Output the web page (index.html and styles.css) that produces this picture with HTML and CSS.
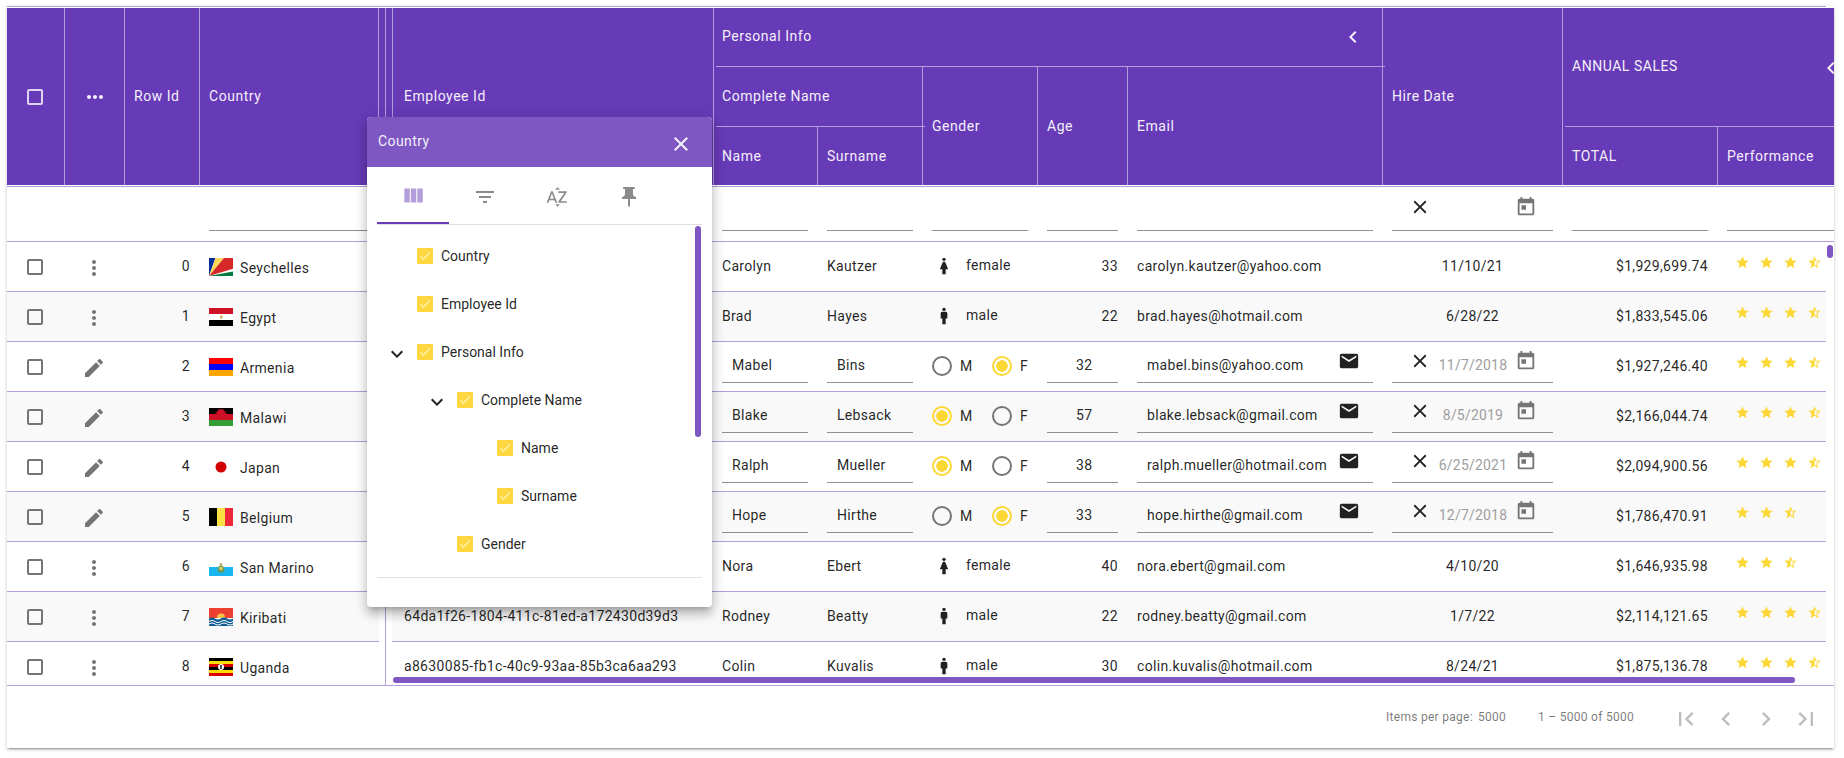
FILE: index.html
```html
<!DOCTYPE html>
<html lang="en">
<head>
<meta charset="utf-8">
<title>Grid</title>
<link rel="stylesheet" href="styles.css">
</head>
<body>
<svg class="sprite" aria-hidden="true">
  <defs>
    <symbol id="i-dots-h" viewBox="0 0 24 24"><path d="M6 10c-1.1 0-2 .9-2 2s.9 2 2 2 2-.9 2-2-.9-2-2-2zm12 0c-1.1 0-2 .9-2 2s.9 2 2 2 2-.9 2-2-.9-2-2-2zm-6 0c-1.1 0-2 .9-2 2s.9 2 2 2 2-.9 2-2-.9-2-2-2z"/></symbol>
    <symbol id="i-dots-v" viewBox="0 0 24 24"><path d="M12 8c1.1 0 2-.9 2-2s-.9-2-2-2-2 .9-2 2 .9 2 2 2zm0 2c-1.1 0-2 .9-2 2s.9 2 2 2 2-.9 2-2-.9-2-2-2zm0 6c-1.1 0-2 .9-2 2s.9 2 2 2 2-.9 2-2-.9-2-2-2z"/></symbol>
    <symbol id="i-edit" viewBox="0 0 24 24"><path d="M3 17.25V21h3.75L17.81 9.94l-3.75-3.75L3 17.25zM20.71 7.04c.39-.39.39-1.02 0-1.41l-2.34-2.34c-.39-.39-1.02-.39-1.41 0l-1.83 1.83 3.75 3.75 1.83-1.83z"/></symbol>
    <symbol id="i-left" viewBox="0 0 24 24"><path d="M15.41 7.41L14 6l-6 6 6 6 1.41-1.41L10.83 12z"/></symbol>
    <symbol id="i-right" viewBox="0 0 24 24"><path d="M10 6L8.59 7.41 13.17 12l-4.58 4.59L10 18l6-6z"/></symbol>
    <symbol id="i-first" viewBox="0 0 24 24"><path d="M18.41 16.59L13.82 12l4.59-4.59L17 6l-6 6 6 6zM6 6h2v12H6z"/></symbol>
    <symbol id="i-last" viewBox="0 0 24 24"><path d="M5.59 7.41L10.18 12l-4.59 4.59L7 18l6-6-6-6zM16 6h2v12h-2z"/></symbol>
    <symbol id="i-down" viewBox="0 0 24 24"><path d="M16.59 8.59L12 13.17 7.41 8.59 6 10l6 6 6-6z"/></symbol>
    <symbol id="i-close" viewBox="0 0 24 24"><path d="M19 6.41L17.59 5 12 10.59 6.41 5 5 6.41 10.59 12 5 17.59 6.41 19 12 13.41 17.59 19 19 17.59 13.41 12z"/></symbol>
    <symbol id="i-today" viewBox="0 0 24 24"><path d="M19 3h-1V1h-2v2H8V1H6v2H5c-1.11 0-1.99.9-1.99 2L3 19c0 1.1.89 2 2 2h14c1.1 0 2-.9 2-2V5c0-1.1-.9-2-2-2zm0 16H5V8h14v11zM7 10h5v5H7z"/></symbol>
    <symbol id="i-mail" viewBox="0 0 24 24"><path d="M20 4H4c-1.1 0-1.99.9-1.99 2L2 18c0 1.1.9 2 2 2h16c1.1 0 2-.9 2-2V6c0-1.1-.9-2-2-2zm0 4l-8 5-8-5V6l8 5 8-5v2z"/></symbol>
    <symbol id="i-star" viewBox="0 0 24 24"><path d="M12 17.27L18.18 21l-1.64-7.03L22 9.24l-7.19-.61L12 2 9.19 8.63 2 9.24l5.46 4.73L5.82 21z"/></symbol>
    <symbol id="i-half" viewBox="0 0 24 24"><path d="M22 9.24l-7.19-.62L12 2 9.19 8.63 2 9.24l5.46 4.73L5.82 21 12 17.27 18.18 21l-1.63-7.03L22 9.24zM12 15.4V6.1l1.71 4.04 4.38.38-3.32 2.88 1 4.28L12 15.4z"/></symbol>
    <symbol id="i-woman" viewBox="0 0 24 24"><circle cx="12" cy="4" r="2"/><path d="M13.94 8.31C13.62 7.52 12.85 7 12 7s-1.62.52-1.94 1.31L7 16h3v6h4v-6h3l-3.06-7.69z"/></symbol>
    <symbol id="i-man" viewBox="0 0 24 24"><circle cx="12" cy="4" r="2"/><path d="M14 7h-4c-1.1 0-2 .9-2 2v6h2v7h4v-7h2V9c0-1.1-.9-2-2-2z"/></symbol>
    <symbol id="i-columns" viewBox="0 0 24 24"><path d="M10 18h5V5h-5v13zm-6 0h5V5H4v13zM16 5v13h5V5h-5z"/></symbol>
    <symbol id="i-filter" viewBox="0 0 24 24"><path d="M10 18h4v-2h-4v2zM3 6v2h18V6H3zm3 7h12v-2H6v2z"/></symbol>
    <symbol id="i-sort" viewBox="0 0 24 24"><path d="M14.94 4.66h-4.72l2.36-2.36zm-4.69 14.71h4.66l-2.33 2.33zM6.1 6.27L1.6 17.73h1.84l.92-2.45h5.11l.92 2.45h1.84L7.74 6.27H6.1zm-1.13 7.37l1.94-5.18 1.94 5.18H4.97zm10.76 2.5h6.12v1.59h-8.53v-1.29l5.92-8.56h-5.88v-1.6h8.3v1.26l-5.93 8.6z"/></symbol>
    <symbol id="i-pin" viewBox="0 0 24 24"><path d="M16 9V4h1c.55 0 1-.45 1-1s-.45-1-1-1H7c-.55 0-1 .45-1 1s.45 1 1 1h1v5c0 1.66-1.34 3-3 3v2h5.97v7l1 1 1-1v-7H19v-2c-1.66 0-3-1.34-3-3z"/></symbol>
    <symbol id="i-check" viewBox="0 0 16 16"><path d="M3.5 8.2l3 3.2 6-7" fill="none" stroke="#fff" stroke-width="1"/></symbol>

    <symbol id="f-sc" viewBox="0 0 24 18"><rect width="24" height="18" fill="#fff"/><path d="M0 18V0h6.500z" fill="#002f9e"/><path d="M0 18L6.500 0h8.500z" fill="#fcd856"/><path d="M0 18L15 0h9v10.800z" fill="#d62828"/><path d="M0 18l24-4.500V18z" fill="#007a3d"/></symbol>
    <symbol id="f-eg" viewBox="0 0 24 18"><rect width="24" height="6" fill="#ce1126"/><rect y="6" width="24" height="6" fill="#fff"/><rect y="12" width="24" height="6" fill="#000"/><rect x="11" y="7.500" width="2.500" height="3" fill="#d8b35a"/></symbol>
    <symbol id="f-am" viewBox="0 0 24 18"><rect width="24" height="6" fill="#f00"/><rect y="6" width="24" height="6" fill="#00f"/><rect y="12" width="24" height="6" fill="#ffa500"/></symbol>
    <symbol id="f-mw" viewBox="0 0 24 18"><rect width="24" height="6" fill="#000"/><rect y="6" width="24" height="6" fill="#ce1126"/><rect y="12" width="24" height="6" fill="#339e35"/><path d="M7.500 6a4.500 4.500 0 0 1 9 0zM5.500 5.500h1M17.500 5.500h1M6.500 3l1 .7M17.500 3l-1 .7M9.500 1.200l.4 1M14.500 1.200l-.4 1" fill="#ce1126" stroke="#ce1126" stroke-width=".6"/></symbol>
    <symbol id="f-jp" viewBox="0 0 24 18"><circle cx="12" cy="9" r="5.500" fill="#d30000"/></symbol>
    <symbol id="f-be" viewBox="0 0 24 18"><rect width="8" height="18" fill="#000"/><rect x="8" width="8" height="18" fill="#fae042"/><rect x="16" width="8" height="18" fill="#ed2939"/></symbol>
    <symbol id="f-sm" viewBox="0 0 24 18"><rect y="9" width="24" height="9" fill="#19b6f0"/><path d="M8.500 13c0-4 1.500-5.500 3.500-5.500s3.500 1.500 3.500 5.500c-1 2-6 2-7 0z" fill="#5c9a55"/><circle cx="12" cy="10.500" r="2" fill="#d9c46a"/><path d="M10.500 5.500h3l-.5 2h-2z" fill="#b5a04a"/></symbol>
    <symbol id="f-ki" viewBox="0 0 24 18"><rect width="24" height="18" fill="#eb4030"/><circle cx="12" cy="9.500" r="4" fill="#f7c24a"/><rect y="10" width="24" height="8" fill="#fff"/><path d="M0 10.500q3-2 6 0t6 0 6 0 6 0V13q-3 2-6 0t-6 0-6 0-6 0zM0 14q3-2 6 0t6 0 6 0 6 0V18H0z" fill="#0f5c92"/><path d="M0 15.500q3-2 6 0t6 0 6 0 6 0v1q-3 2-6 0t-6 0-6 0-6 0z" fill="#fff"/></symbol>
    <symbol id="f-ug" viewBox="0 0 24 18"><rect width="24" height="3" fill="#000"/><rect y="3" width="24" height="3" fill="#fcdc04"/><rect y="6" width="24" height="3" fill="#d90000"/><rect y="9" width="24" height="3" fill="#000"/><rect y="12" width="24" height="3" fill="#fcdc04"/><rect y="15" width="24" height="3" fill="#d90000"/><circle cx="12" cy="9" r="3" fill="#fff"/><path d="M11 7h2v4h-2z" fill="#555"/></symbol>
  </defs>
</svg>

<main class="card">
  <div class="topline"></div>

  <div class="head cols">
    <div class="hc h-a center"><span class="box box-light"></span></div>
    <div class="hc h-b center"><svg class="ic"><use href="#i-dots-h"/></svg></div>
    <div class="hc h-c">Row Id</div>
    <div class="hc h-d end-line">Country</div>
    <div class="h-gap gap"></div>
    <div class="hc h-e pad-emp">Employee Id</div>
    <div class="hc h-personal rule"><span class="grow">Personal Info</span><svg class="ic ic-personal"><use href="#i-left"/></svg></div>
    <div class="hc h-complete rule">Complete Name</div>
    <div class="hc h-name">Name</div>
    <div class="hc h-surname">Surname</div>
    <div class="hc h-gender">Gender</div>
    <div class="hc h-age">Age</div>
    <div class="hc h-email">Email</div>
    <div class="hc h-hire">Hire Date</div>
    <div class="hc h-annual rule"><span class="grow">ANNUAL SALES</span><svg class="ic ic-annual"><use href="#i-left"/></svg></div>
    <div class="hc h-total">TOTAL</div>
    <div class="hc h-perf">Performance</div>
  </div>

  <div class="filter cols">
    <div></div><div></div><div></div>
    <div class="fc"><div class="field"></div></div>
    <div></div>
    <div class="fc"><div class="field"></div></div>
    <div class="fc fc-name"><div class="field"></div></div>
    <div class="fc"><div class="field"></div></div>
    <div class="fc"><div class="field"></div></div>
    <div class="fc"><div class="field"></div></div>
    <div class="fc"><div class="field"></div></div>
    <div class="fc"><div class="field field-date"><svg class="ic ic22 dark"><use href="#i-close"/></svg><span class="date"></span><svg class="ic ic22 grey"><use href="#i-today"/></svg></div></div>
    <div class="fc"><div class="field"></div></div>
    <div class="fc"><div class="field"></div></div>
  </div>

  <div class="body">
    <div class="rows">

      <div class="row cols">
        <div class="cell center first"><span class="box"></span></div>
        <div class="cell center"><svg class="ic grey"><use href="#i-dots-v"/></svg></div>
        <div class="cell num id">0</div>
        <div class="cell flagcell"><svg class="flag"><use href="#f-sc"/></svg><span>Seychelles</span></div>
        <div class="gap"></div>
        <div class="cell emp"></div>
        <div class="cell name">Carolyn</div>
        <div class="cell">Kautzer</div>
        <div class="cell gender"><svg class="ic-g"><use href="#i-woman"/></svg><span class="gtext">female</span></div>
        <div class="cell num">33</div>
        <div class="cell">carolyn.kautzer@yahoo.com</div>
        <div class="cell mid">11/10/21</div>
        <div class="cell num">$1,929,699.74</div>
        <div class="cell stars"><svg class="st"><use href="#i-star"/></svg><svg class="st"><use href="#i-star"/></svg><svg class="st"><use href="#i-star"/></svg><svg class="st"><use href="#i-half"/></svg></div>
      </div>

      <div class="row cols alt">
        <div class="cell center first"><span class="box"></span></div>
        <div class="cell center"><svg class="ic grey"><use href="#i-dots-v"/></svg></div>
        <div class="cell num id">1</div>
        <div class="cell flagcell"><svg class="flag"><use href="#f-eg"/></svg><span>Egypt</span></div>
        <div class="gap"></div>
        <div class="cell emp"></div>
        <div class="cell name">Brad</div>
        <div class="cell">Hayes</div>
        <div class="cell gender"><svg class="ic-g"><use href="#i-man"/></svg><span class="gtext">male</span></div>
        <div class="cell num">22</div>
        <div class="cell">brad.hayes@hotmail.com</div>
        <div class="cell mid">6/28/22</div>
        <div class="cell num">$1,833,545.06</div>
        <div class="cell stars"><svg class="st"><use href="#i-star"/></svg><svg class="st"><use href="#i-star"/></svg><svg class="st"><use href="#i-star"/></svg><svg class="st"><use href="#i-half"/></svg></div>
      </div>

      <div class="row cols">
        <div class="cell center first"><span class="box"></span></div>
        <div class="cell center"><svg class="ic grey"><use href="#i-edit"/></svg></div>
        <div class="cell num id">2</div>
        <div class="cell flagcell"><svg class="flag"><use href="#f-am"/></svg><span>Armenia</span></div>
        <div class="gap"></div>
        <div class="cell emp"></div>
        <div class="cell name edit"><div class="field"><span class="val">Mabel</span></div></div>
        <div class="cell edit"><div class="field"><span class="val">Bins</span></div></div>
        <div class="cell radios"><span class="radio"></span><span class="rl">M</span><span class="radio on"></span><span class="rl">F</span></div>
        <div class="cell edit"><div class="field"><span class="val val-age">32</span></div></div>
        <div class="cell edit"><div class="field field-mail"><span class="val grow">mabel.bins@yahoo.com</span><svg class="ic ic22 dark"><use href="#i-mail"/></svg></div></div>
        <div class="cell edit"><div class="field field-date"><svg class="ic ic22 dark"><use href="#i-close"/></svg><span class="date">11/7/2018</span><svg class="ic ic22 grey"><use href="#i-today"/></svg></div></div>
        <div class="cell num">$1,927,246.40</div>
        <div class="cell stars"><svg class="st"><use href="#i-star"/></svg><svg class="st"><use href="#i-star"/></svg><svg class="st"><use href="#i-star"/></svg><svg class="st"><use href="#i-half"/></svg></div>
      </div>

      <div class="row cols alt">
        <div class="cell center first"><span class="box"></span></div>
        <div class="cell center"><svg class="ic grey"><use href="#i-edit"/></svg></div>
        <div class="cell num id">3</div>
        <div class="cell flagcell"><svg class="flag"><use href="#f-mw"/></svg><span>Malawi</span></div>
        <div class="gap"></div>
        <div class="cell emp"></div>
        <div class="cell name edit"><div class="field"><span class="val">Blake</span></div></div>
        <div class="cell edit"><div class="field"><span class="val">Lebsack</span></div></div>
        <div class="cell radios"><span class="radio on"></span><span class="rl">M</span><span class="radio"></span><span class="rl">F</span></div>
        <div class="cell edit"><div class="field"><span class="val val-age">57</span></div></div>
        <div class="cell edit"><div class="field field-mail"><span class="val grow">blake.lebsack@gmail.com</span><svg class="ic ic22 dark"><use href="#i-mail"/></svg></div></div>
        <div class="cell edit"><div class="field field-date"><svg class="ic ic22 dark"><use href="#i-close"/></svg><span class="date">8/5/2019</span><svg class="ic ic22 grey"><use href="#i-today"/></svg></div></div>
        <div class="cell num">$2,166,044.74</div>
        <div class="cell stars"><svg class="st"><use href="#i-star"/></svg><svg class="st"><use href="#i-star"/></svg><svg class="st"><use href="#i-star"/></svg><svg class="st"><use href="#i-half"/></svg></div>
      </div>

      <div class="row cols">
        <div class="cell center first"><span class="box"></span></div>
        <div class="cell center"><svg class="ic grey"><use href="#i-edit"/></svg></div>
        <div class="cell num id">4</div>
        <div class="cell flagcell"><svg class="flag"><use href="#f-jp"/></svg><span>Japan</span></div>
        <div class="gap"></div>
        <div class="cell emp"></div>
        <div class="cell name edit"><div class="field"><span class="val">Ralph</span></div></div>
        <div class="cell edit"><div class="field"><span class="val">Mueller</span></div></div>
        <div class="cell radios"><span class="radio on"></span><span class="rl">M</span><span class="radio"></span><span class="rl">F</span></div>
        <div class="cell edit"><div class="field"><span class="val val-age">38</span></div></div>
        <div class="cell edit"><div class="field field-mail"><span class="val grow">ralph.mueller@hotmail.com</span><svg class="ic ic22 dark"><use href="#i-mail"/></svg></div></div>
        <div class="cell edit"><div class="field field-date"><svg class="ic ic22 dark"><use href="#i-close"/></svg><span class="date">6/25/2021</span><svg class="ic ic22 grey"><use href="#i-today"/></svg></div></div>
        <div class="cell num">$2,094,900.56</div>
        <div class="cell stars"><svg class="st"><use href="#i-star"/></svg><svg class="st"><use href="#i-star"/></svg><svg class="st"><use href="#i-star"/></svg><svg class="st"><use href="#i-half"/></svg></div>
      </div>

      <div class="row cols alt">
        <div class="cell center first"><span class="box"></span></div>
        <div class="cell center"><svg class="ic grey"><use href="#i-edit"/></svg></div>
        <div class="cell num id">5</div>
        <div class="cell flagcell"><svg class="flag"><use href="#f-be"/></svg><span>Belgium</span></div>
        <div class="gap"></div>
        <div class="cell emp"></div>
        <div class="cell name edit"><div class="field"><span class="val">Hope</span></div></div>
        <div class="cell edit"><div class="field"><span class="val">Hirthe</span></div></div>
        <div class="cell radios"><span class="radio"></span><span class="rl">M</span><span class="radio on"></span><span class="rl">F</span></div>
        <div class="cell edit"><div class="field"><span class="val val-age">33</span></div></div>
        <div class="cell edit"><div class="field field-mail"><span class="val grow">hope.hirthe@gmail.com</span><svg class="ic ic22 dark"><use href="#i-mail"/></svg></div></div>
        <div class="cell edit"><div class="field field-date"><svg class="ic ic22 dark"><use href="#i-close"/></svg><span class="date">12/7/2018</span><svg class="ic ic22 grey"><use href="#i-today"/></svg></div></div>
        <div class="cell num">$1,786,470.91</div>
        <div class="cell stars"><svg class="st"><use href="#i-star"/></svg><svg class="st"><use href="#i-star"/></svg><svg class="st"><use href="#i-half"/></svg></div>
      </div>

      <div class="row cols">
        <div class="cell center first"><span class="box"></span></div>
        <div class="cell center"><svg class="ic grey"><use href="#i-dots-v"/></svg></div>
        <div class="cell num id">6</div>
        <div class="cell flagcell"><svg class="flag"><use href="#f-sm"/></svg><span>San Marino</span></div>
        <div class="gap"></div>
        <div class="cell emp"></div>
        <div class="cell name">Nora</div>
        <div class="cell">Ebert</div>
        <div class="cell gender"><svg class="ic-g"><use href="#i-woman"/></svg><span class="gtext">female</span></div>
        <div class="cell num">40</div>
        <div class="cell">nora.ebert@gmail.com</div>
        <div class="cell mid">4/10/20</div>
        <div class="cell num">$1,646,935.98</div>
        <div class="cell stars"><svg class="st"><use href="#i-star"/></svg><svg class="st"><use href="#i-star"/></svg><svg class="st"><use href="#i-half"/></svg></div>
      </div>

      <div class="row cols alt">
        <div class="cell center first"><span class="box"></span></div>
        <div class="cell center"><svg class="ic grey"><use href="#i-dots-v"/></svg></div>
        <div class="cell num id">7</div>
        <div class="cell flagcell"><svg class="flag"><use href="#f-ki"/></svg><span>Kiribati</span></div>
        <div class="gap"></div>
        <div class="cell emp">64da1f26-1804-411c-81ed-a172430d39d3</div>
        <div class="cell name">Rodney</div>
        <div class="cell">Beatty</div>
        <div class="cell gender"><svg class="ic-g"><use href="#i-man"/></svg><span class="gtext">male</span></div>
        <div class="cell num">22</div>
        <div class="cell">rodney.beatty@gmail.com</div>
        <div class="cell mid">1/7/22</div>
        <div class="cell num">$2,114,121.65</div>
        <div class="cell stars"><svg class="st"><use href="#i-star"/></svg><svg class="st"><use href="#i-star"/></svg><svg class="st"><use href="#i-star"/></svg><svg class="st"><use href="#i-half"/></svg></div>
      </div>

      <div class="row cols">
        <div class="cell center first"><span class="box"></span></div>
        <div class="cell center"><svg class="ic grey"><use href="#i-dots-v"/></svg></div>
        <div class="cell num id">8</div>
        <div class="cell flagcell"><svg class="flag"><use href="#f-ug"/></svg><span>Uganda</span></div>
        <div class="gap"></div>
        <div class="cell emp">a8630085-fb1c-40c9-93aa-85b3ca6aa293</div>
        <div class="cell name">Colin</div>
        <div class="cell">Kuvalis</div>
        <div class="cell gender"><svg class="ic-g"><use href="#i-man"/></svg><span class="gtext">male</span></div>
        <div class="cell num">30</div>
        <div class="cell">colin.kuvalis@hotmail.com</div>
        <div class="cell mid">8/24/21</div>
        <div class="cell num">$1,875,136.78</div>
        <div class="cell stars"><svg class="st"><use href="#i-star"/></svg><svg class="st"><use href="#i-star"/></svg><svg class="st"><use href="#i-star"/></svg><svg class="st"><use href="#i-half"/></svg></div>
      </div>

    </div>
    <div class="thumb-v"></div>
    <div class="thumb-h"></div>
  </div>

  <footer class="foot">
    <span class="per">Items per page:</span>
    <span class="size">5000</span>
    <span class="range">1 – 5000 of 5000</span>
    <div class="pager">
      <svg class="ic ic28"><use href="#i-first"/></svg>
      <svg class="ic ic28"><use href="#i-left"/></svg>
      <svg class="ic ic28"><use href="#i-right"/></svg>
      <svg class="ic ic28"><use href="#i-last"/></svg>
    </div>
  </footer>

  <section class="popup">
    <header class="pop-head"><span class="grow">Country</span><svg class="ic"><use href="#i-close"/></svg></header>
    <nav class="tabs">
      <div class="tab active"><svg class="ic ic26"><use href="#i-columns"/></svg></div>
      <div class="tab"><svg class="ic"><use href="#i-filter"/></svg></div>
      <div class="tab"><svg class="ic"><use href="#i-sort"/></svg></div>
      <div class="tab"><svg class="ic"><use href="#i-pin"/></svg></div>
    </nav>
    <div class="tree">
      <div class="node l0"><span class="tick"><svg><use href="#i-check"/></svg></span>Country</div>
      <div class="node l0"><span class="tick"><svg><use href="#i-check"/></svg></span>Employee Id</div>
      <div class="node l0"><svg class="ic chev"><use href="#i-down"/></svg><span class="tick"><svg><use href="#i-check"/></svg></span>Personal Info</div>
      <div class="node l1"><svg class="ic chev"><use href="#i-down"/></svg><span class="tick"><svg><use href="#i-check"/></svg></span>Complete Name</div>
      <div class="node l2"><span class="tick"><svg><use href="#i-check"/></svg></span>Name</div>
      <div class="node l2"><span class="tick"><svg><use href="#i-check"/></svg></span>Surname</div>
      <div class="node l1"><span class="tick"><svg><use href="#i-check"/></svg></span>Gender</div>
    </div>
    <div class="pop-foot"></div>
    <div class="pop-thumb"></div>
  </section>
</main>
</body>
</html>
```

FILE: styles.css
```css
* { box-sizing: border-box; }

html, body { margin: 0; padding: 0; background: #fff; }

body {
  font-family: Roboto, "Liberation Sans", sans-serif;
  font-size: 14px;
  color: rgba(0, 0, 0, .87);
  overflow: hidden;
  height: 758px;
  letter-spacing: .32px;
}

.sprite { position: absolute; width: 0; height: 0; }

.card {
  position: relative;
  margin: 6px 0 0 7px;
  width: 1827px;
  height: 742px;
  background: #fff;
  overflow: hidden;
  box-shadow: 0 3px 1px -2px rgba(0,0,0,.2), 0 2px 2px 0 rgba(0,0,0,.14), 0 1px 5px 0 rgba(0,0,0,.12);
}

.topline {
  width: 1819px;
  height: 2px;
  border-top: 1px solid #b39ddb;
}

.cols {
  display: grid;
  grid-template-columns: 57px 60px 75px 180px 13px 321px 104px 105px 115px 90px 255px 180px 155px 130px;
}

/* header */
.head {
  grid-template-rows: 59px 60px 58px;
  background: #673ab7;
  color: #f4f0fa;
  width: 1840px;
  letter-spacing: .54px;
}

.hc {
  position: relative;
  display: flex;
  align-items: center;
  padding: 0 8px 2px 9px;
  border-left: 1px solid #b39ddb;
}

.hc.center { justify-content: center; padding-bottom: 0; }

.h-a { grid-column: 1; grid-row: 1 / 4; border-left: 0; padding-right: 10px; }
.h-b { grid-column: 2; grid-row: 1 / 4; }
.h-c { grid-column: 3; grid-row: 1 / 4; }
.h-d { grid-column: 4; grid-row: 1 / 4; }
.h-gap { grid-column: 5; grid-row: 1 / 4; }
.h-e { grid-column: 6; grid-row: 1 / 4; }
.h-personal { grid-column: 7 / 12; grid-row: 1; padding-bottom: 3px; }
.h-complete { grid-column: 7 / 9; grid-row: 2; }
.h-name { grid-column: 7; grid-row: 3; padding-left: 8px; padding-bottom: 0; }
.h-surname { grid-column: 8; grid-row: 3; padding-bottom: 0; }
.h-gender { grid-column: 9; grid-row: 2 / 4; padding-bottom: 0; }
.h-age { grid-column: 10; grid-row: 2 / 4; padding-bottom: 0; }
.h-email { grid-column: 11; grid-row: 2 / 4; padding-bottom: 0; }
.h-hire { grid-column: 12; grid-row: 1 / 4; }
.h-annual { grid-column: 13 / 15; grid-row: 1 / 3; padding-bottom: 4px; }
.h-total { grid-column: 13; grid-row: 3; padding-bottom: 0; }
.h-perf { grid-column: 14; grid-row: 3; padding-bottom: 0; }

.h-personal, .h-complete { padding-left: 8px; }
.pad-emp { padding-left: 11px; }
.end-line { border-right: 1px solid #b39ddb; }

.rule::after {
  content: "";
  position: absolute;
  left: 2px;
  right: -3px;
  bottom: 0;
  height: 1px;
  background: #b39ddb;
}

.grow { flex: 1; }
.ic-personal { margin-right: 9px; margin-top: 2px; }
.ic-annual { margin-right: -4px; margin-top: 4px; }

.gap {
  background: linear-gradient(#b39ddb, #b39ddb) center / 1px 100% no-repeat;
}

.filter {
  height: 57px;
  border-top: 1px solid #fff;
  border-bottom: 1px solid #b39ddb;
  box-shadow: inset 0 1px 0 #b39ddb;
  padding-top: 1px;
}

.fc { padding: 0 9px 0 10px; }
.fc-name { padding-left: 9px; }

.field {
  height: 41px;
  border-bottom: 1px solid #8f8f8f;
  display: flex;
  align-items: center;
}

.filter .field { height: 44px; }
.filter .field-date .ic { margin-top: 9px; }

/* body */
.body { position: relative; height: 443px; }
.rows { width: 1819px; height: 443px; overflow: hidden; }

.row { height: 50px; }

.cell {
  display: flex;
  align-items: center;
  height: 50px;
  padding: 0 9px 0 10px;
  border-bottom: 1px solid #b39ddb;
  padding-bottom: 1px;
  overflow: hidden;
  white-space: nowrap;
}

.alt .cell { background: #f9f9f9; }
.cell.center { justify-content: center; padding: 0; }
.cell.center .ic { margin-top: 3px; }
.cell.first { padding: 1px 2px 0 0; }
.mid { justify-content: center; }
.num { justify-content: flex-end; }
.name { padding-left: 9px; }
.emp { padding-left: 12px; }
.edit { display: block; padding-bottom: 0; }

.flagcell { gap: 7px; }
.flagcell span { padding-top: 4px; }
.flag { width: 24px; height: 18px; flex: none; margin-top: 1px; }

.gender { padding-left: 12px; }
.ic-g { width: 20px; height: 20px; fill: #212121; flex: none; }
.gtext { margin-left: 12px; padding-bottom: 2px; }

.stars { padding-left: 18px; padding-bottom: 8px; gap: 9px; }
.st { width: 15px; height: 15px; fill: #fdd835; flex: none; }

.val { padding: 6px 0 0 10px; }
.val-age { padding-left: 29px; }

.field-mail { padding-right: 13px; }
.field-mail .ic { align-self: flex-start; margin-top: 8px; }
.field-date { padding: 0 16px 0 17px; }
.field-date .ic { align-self: flex-start; margin-top: 8px; }
.date { flex: 1; text-align: center; color: #9e9e9e; padding-top: 6px; letter-spacing: .2px; }

.radios { padding: 0 0 1px 10px; }
.radio {
  width: 20px;
  height: 20px;
  border: 2px solid #757575;
  border-radius: 50%;
  flex: none;
  margin-right: 8px;
}
.radio.on {
  border-color: #fdd835;
  background: radial-gradient(circle, #fdd835 0 5.5px, transparent 6px);
}
.rl { width: 32px; flex: none; }
.rl:last-child { width: 14px; }

.box {
  display: block;
  width: 16px;
  height: 16px;
  border: 2px solid #757575;
  border-radius: 2px;
}
.box-light { border-color: #ddd4ef; }

.ic { width: 24px; height: 24px; fill: currentColor; flex: none; }
.ic22 { width: 22px; height: 22px; }
.ic26 { width: 26px; height: 26px; }
.ic28 { width: 28px; height: 28px; }
.grey { fill: #757575; }
.dark { fill: #212121; }

.thumb-v {
  position: absolute;
  right: 1px;
  top: 3px;
  width: 6px;
  height: 13px;
  border-radius: 3px;
  background: #7e57c2;
}

.thumb-h {
  position: absolute;
  left: 386px;
  bottom: 2px;
  width: 1402px;
  height: 6px;
  border-radius: 3px;
  background: #7e57c2;
}

/* footer */
.foot {
  height: 63px;
  border-top: 1px solid #b39ddb;
  display: flex;
  align-items: center;
  justify-content: flex-end;
  padding-right: 14px;
  font-size: 12px;
  color: rgba(0, 0, 0, .54);
  letter-spacing: .28px;
}

.size { margin-left: 5px; }
.range { margin-left: 32px; }
.pager { display: flex; gap: 12px; margin-left: 38px; margin-top: 4px; color: #bdbdbd; }

/* popup */
.popup {
  position: absolute;
  left: 360px;
  top: 111px;
  width: 345px;
  height: 490px;
  background: #fff;
  border-radius: 4px;
  overflow: hidden;
  letter-spacing: 0;
  box-shadow: 0 5px 5px -3px rgba(0,0,0,.2), 0 8px 10px 1px rgba(0,0,0,.14), 0 3px 14px 2px rgba(0,0,0,.12);
}

.pop-head {
  height: 50px;
  background: #7e57c2;
  color: #f4f0fa;
  display: flex;
  align-items: center;
  padding: 0 19px 2px 11px;
  letter-spacing: .4px;
}

.pop-head .ic { margin-top: 6px; }

.tabs {
  display: flex;
  height: 58px;
  margin: 0 10px;
  border-bottom: 1px solid #e0e0e0;
}

.tab {
  width: 72px;
  height: 57px;
  display: flex;
  justify-content: center;
  align-items: center;
  padding-top: 3px;
  color: #8a8a8a;
}

.tab.active { color: #b39ddb; border-bottom: 2px solid #673ab7; }

.tree { height: 352px; padding-top: 15px; }

.node {
  position: relative;
  height: 48px;
  display: flex;
  align-items: center;
  padding-bottom: 16px;
  gap: 8px;
}

.l0 { padding-left: 50px; }
.l1 { padding-left: 90px; }
.l2 { padding-left: 130px; }

.tick {
  width: 16px;
  height: 16px;
  background: #ffd740;
  border-radius: 1px;
  flex: none;
  display: block;
}

.tick svg { display: block; width: 16px; height: 16px; }

.chev {
  position: absolute;
  margin-left: -32px;
  margin-top: 3px;
  fill: #212121;
}

.pop-foot { margin: 0 10px; border-top: 1px solid #e0e0e0; }

.pop-thumb {
  position: absolute;
  left: 328px;
  top: 109px;
  width: 6px;
  height: 211px;
  border-radius: 3px;
  background: #7e57c2;
}
```
